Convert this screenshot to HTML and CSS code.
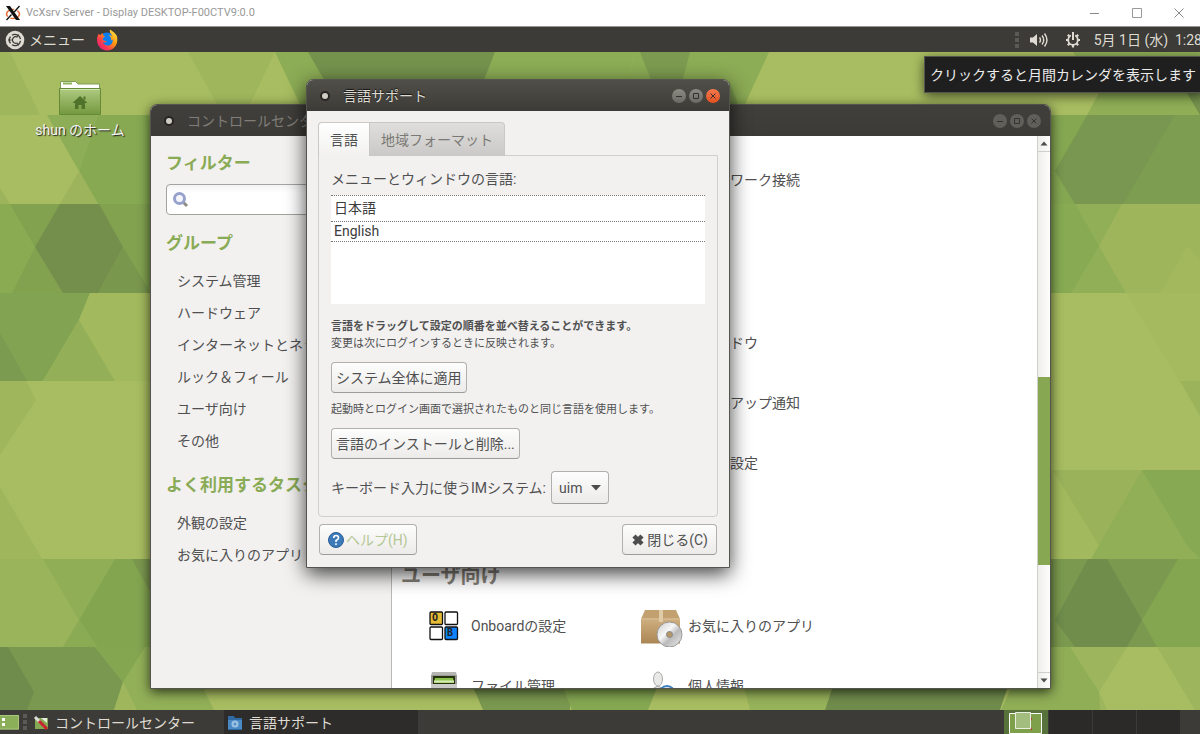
FILE: index.html
```html
<!DOCTYPE html>
<html lang="ja">
<head>
<meta charset="utf-8">
<title>VcXsrv Server - Display DESKTOP-F00CTV9:0.0</title>
<link rel="stylesheet" href="styles.css">
</head>
<body>
<header class="host-bar">
  <svg class="host-logo" width="16" height="16" viewBox="0 0 16 16" aria-hidden="true"><ellipse cx="8" cy="9" rx="6.500" ry="4.500" fill="none" stroke="#e8703a" stroke-width="1.600"/><path d="M14.500 1L1.500 15" stroke="#fff" stroke-width="3"/><path d="M14.500 1L9.300 7M6.500 9.500L1.500 15" stroke="#111" stroke-width="1.300"/><path d="M1 1h4l10 14h-4z" fill="#111"/></svg>
  <span class="host-title">VcXsrv Server - Display DESKTOP-F00CTV9:0.0</span>
  <div class="host-buttons">
    <button aria-label="最小化"><svg width="10" height="10" viewBox="0 0 10 10"><path d="M0 5.500h9" stroke="#888"/></svg></button>
    <button aria-label="最大化"><svg width="10" height="10" viewBox="0 0 10 10"><path d="M.5.500h9v9h-9z" fill="none" stroke="#999"/></svg></button>
    <button aria-label="閉じる"><svg width="10" height="10" viewBox="0 0 10 10"><path d="M.5.500l9 9m0-9l-9 9" stroke="#888"/></svg></button>
  </div>
</header>

<nav class="panel">
  <button class="panel-menu">
    <svg width="20" height="20" viewBox="0 0 20 20" aria-hidden="true"><circle cx="10" cy="10" r="9.300" fill="#dfdbd2"/><path d="M7 5.200A5.600 5.600 0 0 1 15.500 9.200M15.500 10.800A5.600 5.600 0 0 1 7 14.800M5.500 13.400a5.600 5.600 0 0 1 0-6.800" fill="none" stroke="#3c3b37" stroke-width="1.300"/><path d="M12.500 7.200A3.300 3.300 0 1 0 12.500 12.800" fill="none" stroke="#3c3b37" stroke-width="1.200"/><path d="M3 10h3.500M12 7l1.500-2.500M12 13l1.500 2.500" stroke="#3c3b37"/></svg>
    <span>メニュー</span>
  </button>
  <button class="panel-icon" aria-label="Firefox">
    <svg width="22" height="22" viewBox="0 0 22 22"><defs><linearGradient id="fox" x1="1" y1="0" x2="0" y2="1"><stop offset="0" stop-color="#fff44f"/><stop offset=".4" stop-color="#ff980e"/><stop offset=".7" stop-color="#ff3750"/><stop offset="1" stop-color="#d0178c"/></linearGradient></defs><circle cx="11" cy="11.500" r="8" fill="#0a7df0"/><path d="M2.500 5c-4 8 .5 16.500 8.500 16.500S22.500 14 21 7.500C20 4 16 2 14 .5c-1 3 1 4 2.500 6.500-2-1-3-1-4-1 2 1 3 3 2.500 5.500 1-.3 1.500-1 1.500-1.500 1 4-2 7-5.500 6.500-2-.3-4-2-4-3.500 1.500 1 3 .5 4-.8C8 12 6 11 7 9l2-1.500C7.500 7 6.500 5.500 7 4 5.500 4.500 5 5.500 4.500 6z" fill="url(#fox)"/></svg>
  </button>
  <div class="panel-tray">
    <span class="grip"></span>
    <button class="panel-icon" aria-label="音量"><svg width="20" height="16" viewBox="0 0 20 16"><path d="M1 5.500h3L8 2v12L4 10.500H1z" fill="#dfdbd2"/><path d="M10.500 5.500q2 2.500 0 5M13 3.500q3.500 4.500 0 9M15.500 1.500q5 6.500 0 13" fill="none" stroke="#dfdbd2" stroke-width="1.400"/></svg></button>
    <button class="panel-icon" aria-label="セッション"><svg width="16" height="16" viewBox="0 0 16 16"><circle cx="8" cy="8" r="4.800" fill="none" stroke="#dfdbd2" stroke-width="1.800"/><path d="M8 13v2.500M1 8h2M13 8h2M2.800 2.800l1.700 1.700M13.200 2.800l-1.700 1.700M2.800 13.200l1.700-1.700M13.200 13.200l-1.700-1.700" stroke="#dfdbd2" stroke-width="2.200"/><path d="M8 0v8" stroke="#3c3b37" stroke-width="4"/><path d="M8 0v8" stroke="#dfdbd2" stroke-width="2"/></svg></button>
    <button class="panel-clock">5月 1日 (水)&nbsp; 1:28</button>
  </div>
</nav>

<main class="desktop">
  <svg class="wallpaper" viewBox="0 52 1200 658" preserveAspectRatio="none" aria-hidden="true">
    <rect y="52" width="1200" height="658" fill="#a8bd61"/>
    <!-- row 1 -->
    <path d="M0 52H10L40 115H0zM188 52H275L245 115H223z" fill="#9fb65c"/>
    <path d="M275 52H635L620 115H305z" fill="#8cac55"/><path d="M308 52H495L480 90H330z" fill="#75924d"/>
    <path d="M635 52H769L740 115H620z" fill="#8cac55"/><path d="M640 52H690L680 90H655z" fill="#7d9b50"/><path d="M729 80L742 115H729z" fill="#7d9b50"/>
    <path d="M1073 52H1200V115H1087L1099 93z" fill="#8fae56"/><path d="M1187 93H1200V115z" fill="#75924d"/>
    <!-- row 2 -->
    <path d="M47 115H98L79 171z" fill="#8dae56"/><path d="M98 115H160V204H98L79 171z" fill="#86a952"/><path d="M79 171L98 204H60zM0 188L10 204H0z" fill="#9eb45c"/>
    <path d="M1040 115H1200V204H1040z" fill="#7d9e50"/><path d="M1040 115H1087L1055 171 1075 204H1040z" fill="#85a752"/><path d="M1088 115H1175L1123 204H1075L1055 171z" fill="#799750"/>
    <!-- row 3 -->
    <path d="M0 204H160V293H0z" fill="#82a250"/><path d="M0 204H10L35 247 12 293H0z" fill="#8aab52"/><path d="M60 204H99L123 247 98 293H63L35 247z" fill="#748f4c"/><path d="M123 247L151 293H98z" fill="#7a974e"/>
    <path d="M1040 204H1200V293H1040z" fill="#90af57"/><path d="M1040 204H1075L1099 246 1071 293H1040z" fill="#87aa53"/><path d="M1122 204H1200V293H1126L1099 246z" fill="#9eb55c"/><path d="M1187 246L1160 293H1200V260z" fill="#a3b85d"/>
    <!-- row 4 -->
    <path d="M0 293H90L79 320 43 381H0z" fill="#81a352"/><path d="M0 333L27 381H0z" fill="#7b9b50"/><path d="M90 293H160V381H115L79 320z" fill="#a3b95d"/><path d="M79 320L115 381H43z" fill="#93b058"/><path d="M1126 293H1200V415z" fill="#a5ba5f"/>
    <!-- rows 5 and 6 -->
    <path d="M0 381H26L36 400 0 455zM0 487L42 559H0z" fill="#9fb65d"/><path d="M1180 381H1200V416z" fill="#9bb35b"/>
    <path d="M1040 470H1200V559H1040z" fill="#90af57"/><path d="M1040 470H1053L1099 545 1091 559H1040z" fill="#a3b95d"/><path d="M1053 470H1142L1099 545z" fill="#9ab35b"/><path d="M1142 470H1200V559L1187 545z" fill="#87a953"/>
    <!-- row 7 -->
    <path d="M0 559H160V647H0z" fill="#9ab45b"/><path d="M43 559H115L79 620z" fill="#8fae56"/><path d="M115 559H160V647H97L79 620z" fill="#83a550"/><path d="M79 620L97 647H63z" fill="#8aaa54"/><path d="M132 559H160V610z" fill="#7a974e"/>
    <path d="M1040 559H1200V647H1040z" fill="#7b994f"/><path d="M1088 559H1107L1142 620 1127 647H1075L1055 620z" fill="#708d4c"/><path d="M1178 559H1200V647H1157L1142 620z" fill="#84a651"/>
    <!-- row 8 -->
    <path d="M0 647H220L204 690 214 710H0z" fill="#92b058"/><path d="M0 647H95L123 682 114 710H0z" fill="#7a984f"/><path d="M95 647H145L123 682z" fill="#84a651"/><path d="M0 647H8L34 692 27 710H0z" fill="#708c4c"/><path d="M123 682L137 710H114z" fill="#9fb65d"/>
    <path d="M470 680H570V710H483z" fill="#7a984f"/><path d="M560 680H660L648 710H572z" fill="#85a752"/><path d="M742 680H835L825 710H750z" fill="#96b25a"/><path d="M835 680H1010L1000 710H825z" fill="#708c4c"/>
    <path d="M1040 647H1200V710H1001L1015 680z" fill="#8fae56"/><path d="M1070 647H1200V710H1100L1099 692z" fill="#9db55c"/><path d="M1127 647H1157L1195 710H1107L1099 692z" fill="#a8bd61"/>
  </svg>

  <a class="desktop-icon" href="#home">
    <svg width="44" height="38" viewBox="0 0 44 38" aria-hidden="true"><defs><linearGradient id="folder" x1="0" y1="0" x2="0" y2="1"><stop offset="0" stop-color="#b0cb80"/><stop offset="1" stop-color="#73983f"/></linearGradient></defs><path d="M2.500 12V2.500h15L20 5h21.500v8z" fill="#fff" stroke="#7e9d55"/><path d="M5 4.500h9" stroke="#91b35c" stroke-width="2"/><path d="M1.500 9.500h41V35.500h-41z" fill="url(#folder)" stroke="#668b36"/><path d="M2.500 10.500h39" stroke="#d2e3b4"/><path d="M22 17l7.500 7H27v6h-3.500v-4h-3v4H17v-6h-2.500z" fill="#4f732a"/><path d="M25.500 17.500h2v3h-2z" fill="#4f732a"/></svg>
    <span>shun のホーム</span>
  </a>

  <section class="window window--back" aria-label="コントロールセンター">
    <header class="window-bar">
      <span class="window-dot"></span>
      <h1 class="window-title">コントロールセンター</h1>
      <div class="window-buttons">
        <button aria-label="最小化"><svg viewBox="0 0 14 14"><path d="M4 7.500h6"/></svg></button>
        <button aria-label="最大化"><svg viewBox="0 0 14 14"><path d="M4.500 4.500h5v5h-5z"/></svg></button>
        <button aria-label="閉じる"><svg viewBox="0 0 14 14"><path d="M4.500 4.500l5 5m0-5l-5 5"/></svg></button>
      </div>
    </header>
    <div class="center">
      <aside class="sidebar">
        <h2><label for="filter">フィルター</label></h2>
        <div class="search">
          <svg width="18" height="18" viewBox="0 0 18 18" aria-hidden="true"><path d="M11 11l4 4" stroke="#8d8d86" stroke-width="3"/><circle cx="7.500" cy="7.500" r="5" fill="#f4f6fc" stroke="#96a2cc" stroke-width="3"/></svg>
          <input id="filter" type="text">
        </div>
        <h2>グループ</h2>
        <nav class="side-links">
          <a href="#system">システム管理</a>
          <a href="#hardware">ハードウェア</a>
          <a href="#internet">インターネットとネットワーク</a>
          <a href="#look">ルック＆フィール</a>
          <a href="#user">ユーザ向け</a>
          <a href="#other">その他</a>
        </nav>
        <h2>よく利用するタスク</h2>
        <nav class="side-links">
          <a href="#appearance">外観の設定</a>
          <a href="#favorites">お気に入りのアプリ</a>
        </nav>
      </aside>
      <div class="catalog">
        <div class="tiles"><a class="tile tile--second" href="#network"><span class="tile-icon"></span>ネットワーク接続</a></div>
        <h2>ルック＆フィール</h2>
        <div class="tiles">
          <a class="tile tile--second" href="#windows"><span class="tile-icon"></span>ウィンドウ</a>
          <a class="tile tile--second" href="#popup"><span class="tile-icon"></span>ポップアップ通知</a>
          <a class="tile tile--second" href="#look-settings"><span class="tile-icon"></span>外観の設定</a>
        </div>
        <h2>ユーザ向け</h2>
        <div class="tiles">
          <a class="tile" href="#onboard"><span class="tile-icon"><svg width="30" height="30" viewBox="0 0 30 30" aria-hidden="true"><g stroke="#111" stroke-width="1.300"><rect x="1" y="1" width="12.500" height="12.500" rx="1" fill="#e6bc35"/><rect x="16" y="1" width="12.500" height="12.500" rx="1" fill="#fff"/><rect x="1" y="16" width="12.500" height="12.500" rx="1" fill="#fff"/><rect x="16" y="16" width="12.500" height="12.500" rx="1" fill="#0a84ff"/></g><text x="3" y="10" class="key">O</text><text x="18" y="25" class="key">B</text></svg></span>Onboardの設定</a>
          <a class="tile" href="#apps"><span class="tile-icon"><svg width="44" height="42" viewBox="0 0 44 42" aria-hidden="true"><defs><linearGradient id="box" x1="0" y1="0" x2="0" y2="1"><stop offset="0" stop-color="#cfaf80"/><stop offset="1" stop-color="#ab8655"/></linearGradient><linearGradient id="disc" x1="0" y1="0" x2="1" y2="1"><stop offset="0" stop-color="#ccc"/><stop offset=".4" stop-color="#f6f6f6"/><stop offset=".6" stop-color="#bbb"/><stop offset="1" stop-color="#eee"/></linearGradient></defs><path d="M6 5h31l4 9H2z" fill="#c2a06f"/><path d="M2 13.500h39v25H2z" fill="url(#box)"/><path d="M2 14h39" stroke="#dcc39b"/><path d="M20 5h4v12h-4z" fill="#e0cba9"/><circle cx="30.500" cy="29.500" r="12.500" fill="url(#disc)" stroke="#999"/><circle cx="30.500" cy="29.500" r="3" fill="#b39768" stroke="#888"/></svg></span>お気に入りのアプリ</a>
          <a class="tile" href="#files"><span class="tile-icon"><svg width="28" height="30" viewBox="0 0 28 30" aria-hidden="true"><path d="M2 1h24l1 4v24H1V5z" fill="#b5b6b2"/><path d="M1 4h26v25H1z" fill="#999a96"/><path d="M3 5h22v8H3z" fill="#28320f"/><path d="M5 7h18l1 5H4z" fill="#8bc34a"/><path d="M4 10.500h20" stroke="#d9edb8" stroke-width="2"/><path d="M1 13h26v16H1z" fill="#c9cac7"/></svg></span>ファイル管理</a>
          <a class="tile" href="#profile"><span class="tile-icon"><svg width="36" height="30" viewBox="0 0 36 30" aria-hidden="true"><path d="M6 30q0-13 9-15 8 2 9 15z" fill="#ddd" stroke="#aaa"/><ellipse cx="15" cy="8" rx="4.500" ry="7" fill="#e8e8e6" stroke="#aaa"/><circle cx="24" cy="23" r="8" fill="#dce9f6" stroke="#3f7fbf" stroke-width="2"/></svg></span>個人情報</a>
        </div>
      </div>
      <div class="scrollbar" aria-hidden="true">
        <svg viewBox="0 0 12 15" width="12" height="15"><path d="M2.500 9.500L6 5.500l3.500 4z" fill="#4c4c4c"/></svg>
        <div class="scroll-track"><div class="scroll-thumb"></div></div>
        <svg viewBox="0 0 12 15" width="12" height="15"><path d="M2.500 5.500L6 9.500l3.500-4z" fill="#4c4c4c"/></svg>
      </div>
    </div>
  </section>

  <section class="window window--dialog" role="dialog" aria-label="言語サポート">
    <header class="window-bar">
      <span class="window-dot"></span>
      <h1 class="window-title">言語サポート</h1>
      <div class="window-buttons">
        <button aria-label="最小化"><svg viewBox="0 0 14 14"><path d="M4 7.500h6"/></svg></button>
        <button aria-label="最大化"><svg viewBox="0 0 14 14"><path d="M4.500 4.500h5v5h-5z"/></svg></button>
        <button class="close" aria-label="閉じる"><svg viewBox="0 0 14 14"><path d="M4.500 4.500l5 5m0-5l-5 5"/></svg></button>
      </div>
    </header>
    <div class="dialog-body">
      <div class="tabs" role="tablist">
        <button class="tab tab--active" role="tab" aria-selected="true">言語</button>
        <button class="tab" role="tab" aria-selected="false">地域フォーマット</button>
      </div>
      <div class="tab-page" role="tabpanel">
        <p class="list-label" id="list-label">メニューとウィンドウの言語:</p>
        <ul class="lang-list" aria-labelledby="list-label">
          <li>日本語</li>
          <li>English</li>
        </ul>
        <p class="hint"><strong>言語をドラッグして設定の順番を並べ替えることができます。</strong><br>変更は次にログインするときに反映されます。</p>
        <button class="btn">システム全体に適用</button>
        <p class="hint hint--between">起動時とログイン画面で選択されたものと同じ言語を使用します。</p>
        <button class="btn">言語のインストールと削除...</button>
        <div class="im-row">
          <label for="im">キーボード入力に使うIMシステム:</label>
          <div class="combo">
            <select id="im"><option>uim</option></select>
            <svg width="10" height="6" viewBox="0 0 10 6" aria-hidden="true"><path d="M0 0h10L5 5.500z" fill="#4c4c4c"/></svg>
          </div>
        </div>
      </div>
      <footer class="dialog-actions">
        <button class="btn btn--help"><svg width="16" height="16" viewBox="0 0 16 16" aria-hidden="true"><circle cx="8" cy="8" r="7.500" fill="#3d7ab8" stroke="#2b5d94"/><path d="M5.700 6q0-2.500 2.400-2.500T10.500 6Q10.500 7.300 8 8.500V10M8 11.200v1.800" fill="none" stroke="#fff" stroke-width="1.600"/></svg>ヘルプ(H)</button>
        <button class="btn btn--close"><svg width="14" height="14" viewBox="0 0 14 14" aria-hidden="true"><path d="M3 3l8 8m0-8l-8 8" stroke="#4c4c4c" stroke-width="4.500"/></svg>閉じる(C)</button>
      </footer>
    </div>
  </section>

  <div class="tooltip" role="tooltip">クリックすると月間カレンダを表示します</div>
</main>

<footer class="taskbar">
  <button class="show-desktop" aria-label="デスクトップを表示"><svg width="20" height="18" viewBox="0 0 20 18"><path d="M0 2h19v14.500H0z" fill="#8bae58"/><path d="M0 2.500h18.500V16H0" fill="none" stroke="#a8c67c"/><path d="M2 5h3v3H2zM2 10h3v3H2z" fill="#fff"/></svg></button>
  <span class="grip"></span>
  <button class="task"><svg width="16" height="16" viewBox="0 0 16 16" aria-hidden="true"><path d="M2 3h13v11H2z" fill="#86a953"/><path d="M8 3h6v5z" fill="#e8efe0"/><path d="M2 2l5 5" stroke="#ddd" stroke-width="3"/><path d="M6 6l8 8" stroke="#c8242b" stroke-width="3"/></svg>コントロールセンター</button>
  <button class="task task--active"><svg width="16" height="16" viewBox="0 0 16 16" aria-hidden="true"><path d="M1 1h6l1 2h7v12H1z" fill="#2f6aa5"/><path d="M1 5h14v9H1z" fill="#4a8ac4"/><circle cx="8" cy="9" r="3.500" fill="#9cc3e6"/><circle cx="8" cy="9" r="1.500" fill="#5b8fc0"/></svg>言語サポート</button>
  <div class="pager">
    <button class="workspace workspace--active" aria-label="ワークスペース 1"><svg width="44" height="24" viewBox="0 0 44 24"><path d="M5.500 3.500h32v20h-32z" fill="#7fa04a" stroke="#fff"/><path d="M25 6l3 2v3zM24 16l4 2v3z" fill="#b5483c"/><path d="M11.500 2.500h15v16h-15z" fill="#a3bd7f" stroke="#e8efe0"/></svg></button>
    <button class="workspace" aria-label="ワークスペース 2"></button>
    <button class="workspace" aria-label="ワークスペース 3"></button>
    <button class="workspace" aria-label="ワークスペース 4"></button>
  </div>
</footer>
</body>
</html>
```
FILE: styles.css
```css
* { box-sizing: border-box; }

body {
  margin: 0;
  height: 100vh;
  display: flex;
  flex-direction: column;
  overflow: hidden;
  font: 14px/20px Roboto, "Noto Sans CJK JP", sans-serif;
  color: #505050;
}

h1, h2, p, ul { margin: 0; padding: 0; }
ul { list-style: none; }
a { color: inherit; text-decoration: none; }
svg { display: block; flex: none; }

button, input, select {
  margin: 0;
  padding: 0;
  border: 0;
  background: none;
  font: inherit;
  color: inherit;
}

/* Host window frame */
.host-bar {
  flex: none;
  display: flex;
  align-items: center;
  gap: 5px;
  height: 26px;
  padding-left: 5px;
  background: #fff;
  color: #999;
  font-size: 11px;
  line-height: 16px;
}
.host-title { flex: 1; }
.host-buttons { display: flex; }
.host-buttons button {
  width: 42px;
  height: 24px;
  display: grid;
  place-items: center;
}

/* Top panel */
.panel {
  flex: none;
  display: flex;
  align-items: center;
  height: 26px;
  padding-left: 5px;
  background: #3c3b37;
  border-top: 1px solid #98978f;
  color: #dfdbd2;
  text-shadow: 1px 1px 1px #111;
}
.panel-menu { display: flex; align-items: center; gap: 4px; }
.panel-icon { margin-left: 11px; }
.panel-tray { display: flex; align-items: center; margin-left: auto; white-space: nowrap; }
.panel-tray .panel-icon { margin-left: 10px; }
.panel-tray .panel-icon + .panel-icon { margin-left: 16px; }
.panel-clock { margin-left: 13px; margin-right: -2px; }
.grip {
  width: 4px;
  height: 16px;
  background: repeating-linear-gradient(#5b5a55 0 4px, transparent 4px 6px);
}

/* Desktop */
.desktop { position: relative; flex: 1; min-height: 0; overflow: hidden; }
.wallpaper { position: absolute; width: 100%; height: 100%; }
.desktop-icon {
  position: absolute;
  left: 30px;
  top: 27px;
  width: 100px;
  display: flex;
  flex-direction: column;
  align-items: center;
  gap: 3px;
  color: #f4f4f0;
  text-shadow: 1px 1px 1px #222;
  white-space: nowrap;
}

/* Windows */
.window {
  position: absolute;
  display: flex;
  flex-direction: column;
  background: #f2f1f0;
  border: 1px solid #55544e;
  border-radius: 7px 7px 0 0;
  overflow: hidden;
}
.window--back {
  left: 150px;
  right: 149px;
  top: 52px;
  bottom: 21px;
  box-shadow: 0 3px 12px rgba(0, 0, 0, .7);
}
.window--dialog {
  left: 306px;
  top: 27px;
  width: 424px;
  box-shadow: 0 6px 20px rgba(0, 0, 0, .75);
}
.window-bar {
  flex: none;
  display: flex;
  align-items: center;
  height: 31px;
  padding: 0 9px 0 13px;
  background: linear-gradient(#403f3b, #3c3b37);
  color: #807d78;
}
.window--dialog .window-bar {
  background: linear-gradient(#504f49, #3c3b37);
  color: #dfdbd2;
  text-shadow: 0 -1px 1px #111;
}
.window-dot {
  width: 10px;
  height: 10px;
  margin-right: 13px;
  border: 2px solid #262522;
  border-radius: 50%;
  background: #cfccc4;
}
.window-title { flex: 1; font-size: 14px; font-weight: 400; line-height: 20px; white-space: nowrap; }
.window-buttons { display: flex; gap: 3px; }
.window-buttons button { width: 14px; height: 14px; border-radius: 50%; background: #605f5a; }
.window-buttons path { fill: none; stroke: #33322e; }
.window--dialog .window-buttons button { background: linear-gradient(#8b8a83, #6b6a64); }
.window--dialog .window-buttons .close { background: linear-gradient(#f6794f, #e2511f); }

/* Control center */
.center { flex: 1; min-height: 0; display: flex; }
.sidebar {
  flex: none;
  width: 241px;
  padding: 15px 12px 0 15px;
  border-right: 1px solid #b8b8b4;
  overflow: hidden;
  white-space: nowrap;
}
.sidebar h2 { color: #8aab56; font-size: 17px; line-height: 24px; }
.search {
  display: flex;
  align-items: center;
  height: 31px;
  margin: 9px 0 16px;
  padding: 0 5px;
  border: 1px solid #a3a39f;
  border-radius: 4px;
  background: linear-gradient(#f3f3f3, #fff 8px);
}
.search input { flex: 1; min-width: 0; }
.side-links { display: flex; flex-direction: column; gap: 12px; padding: 16px 0 22px 11px; }
.catalog {
  flex: 1;
  min-width: 0;
  padding: 14px 0 0 9px;
  background: #fff;
  overflow: hidden;
}
.catalog h2 {
  margin-top: 61px;
  padding-top: 2px;
  color: #858078;
  font-size: 20px;
  line-height: 40px;
}
.tiles { display: grid; grid-template-columns: 217px 217px; grid-auto-rows: 60px; padding-left: 19px; }
.tile { display: flex; align-items: center; gap: 3px; white-space: nowrap; }
.tile--second { grid-column: 2; }
.tile-icon { width: 48px; display: grid; place-items: center; }
.key { font: bold 10px "DejaVu Sans Mono", monospace; fill: #222; }

.scrollbar {
  flex: none;
  display: flex;
  flex-direction: column;
  width: 13px;
  border-left: 1px solid #cfcfcb;
  background: linear-gradient(90deg, #efeeec, #fdfdfd);
}
.scroll-track {
  flex: 1;
  padding-top: 225px;
  border: solid #cfcfcb;
  border-width: 1px 0;
}
.scroll-thumb { height: 188px; background: #87a752; }

/* Language dialog */
.dialog-body { padding: 11px 11px 12px; }
.tabs { position: relative; display: flex; margin-bottom: -1px; }
.tab {
  height: 34px;
  padding: 0 11px;
  border: 1px solid #c9c8c5;
  border-bottom: 0;
  background: linear-gradient(#dfdedc, #cac9c7);
  color: #7a7975;
  border-radius: 0 4px 0 0;
  white-space: nowrap;
}
.tab--active {
  border-right: 0;
  border-radius: 4px 0 0;
  background: linear-gradient(#fff, #f2f1f0);
  color: #505050;
}
.tab-page {
  padding: 13px 12px 12px;
  border: 1px solid #d0cfcc;
  border-radius: 0 0 4px 4px;
}
.lang-list {
  height: 109px;
  margin: 6px 0 14px;
  background: #fff;
  border-top: 1px dotted #777;
}
.lang-list li { padding: 0 3px; border-bottom: 1px dotted #777; line-height: 19px; color: #3c3c3c; }
.lang-list li:first-child { line-height: 25px; }
.hint { font-size: 11px; line-height: 17px; white-space: nowrap; }
.tab-page .btn { margin-top: 10px; }
.hint--between { padding-top: 8px; }
.btn {
  display: flex;
  align-items: center;
  height: 31px;
  padding: 0 4px;
  border: 1px solid #b1b0ac;
  border-bottom-color: #9c9b97;
  border-radius: 4px;
  background: linear-gradient(#fdfdfd, #ecebe9);
  white-space: nowrap;
}
.im-row { display: flex; align-items: center; gap: 5px; margin-top: 12px; }
.combo {
  position: relative;
  display: flex;
  align-items: center;
  width: 58px;
  height: 33px;
  border: 1px solid #b1b0ac;
  border-bottom-color: #9c9b97;
  border-radius: 4px;
  background: linear-gradient(#fdfdfd, #ecebe9);
}
.combo select { width: 100%; height: 100%; padding-left: 7px; appearance: none; }
.combo svg { position: absolute; right: 7px; pointer-events: none; }
.dialog-actions { display: flex; justify-content: space-between; padding: 7px 1px 0; }
.dialog-actions .btn { padding: 0 8px; gap: 2px; }
.btn--help { color: #b5c795; }

.tooltip {
  position: absolute;
  right: -4px;
  top: 4px;
  padding: 8px 7px 7px 5px;
  border: 1px solid #55544e;
  background: #1f1f1f;
  color: #ececec;
  box-shadow: 0 3px 12px rgba(0, 0, 0, .6);
  white-space: nowrap;
}

/* Bottom panel */
.taskbar {
  flex: none;
  display: flex;
  align-items: center;
  height: 24px;
  background: #3c3b37;
  color: #dfdbd2;
  text-shadow: 1px 1px 1px #111;
}
.show-desktop { width: 23px; }
.taskbar .grip { margin-right: 3px; }
.task {
  display: flex;
  align-items: center;
  gap: 6px;
  width: 194px;
  height: 24px;
  padding: 4px 3px 2px;
  line-height: 18px;
  white-space: nowrap;
}
.task--active { background: #2d2c2a; }
.pager { display: flex; margin-left: auto; padding-right: 20px; }
.workspace { width: 44px; height: 24px; background: #2b2a28; border-left: 1px solid #3c3b37; }
.workspace--active { background: #57723a; border: 0; }
```
